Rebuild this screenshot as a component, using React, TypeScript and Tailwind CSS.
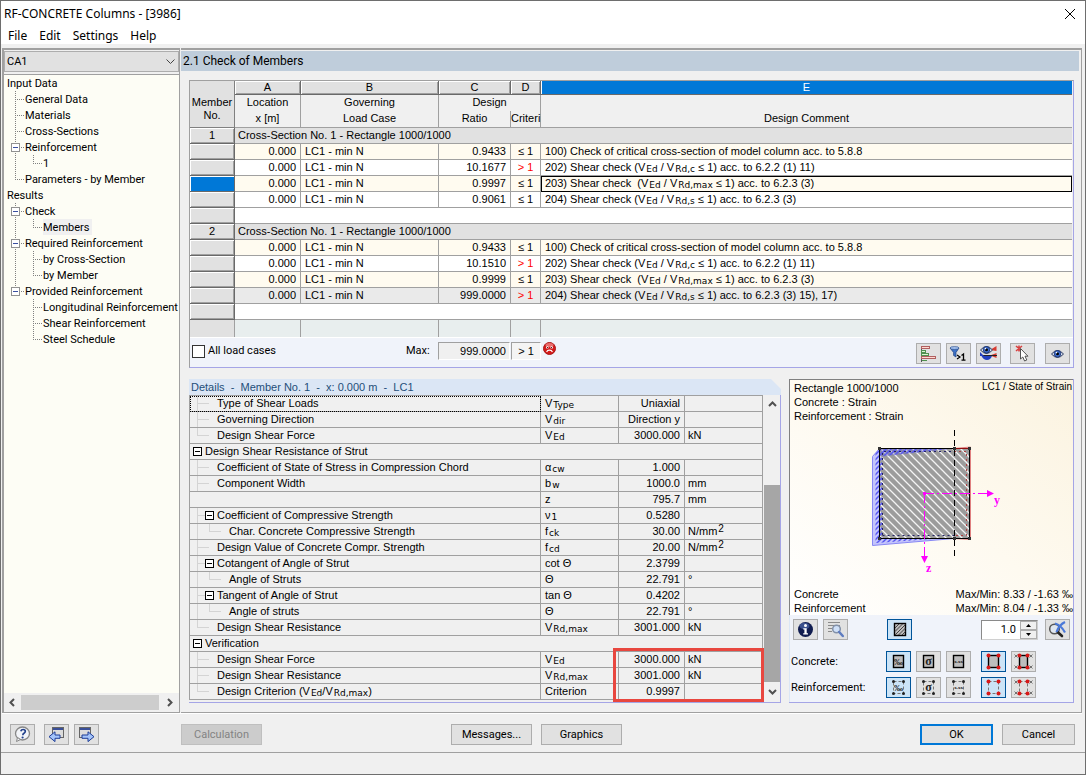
import React from 'react';

const ui = "font-[Roboto,'Liberation_Sans',sans-serif]";

/* ---------- data ---------- */

type Guide = 'tee' | 'elbow' | 'pipe' | 'boxTee' | 'boxElbow';

interface TreeItem {
  label: string;
  guides: Guide[];
  active?: boolean;
}

const treeItems: TreeItem[] = [
  { label: 'Input Data', guides: [] },
  { label: 'General Data', guides: ['tee'] },
  { label: 'Materials', guides: ['tee'] },
  { label: 'Cross-Sections', guides: ['tee'] },
  { label: 'Reinforcement', guides: ['boxTee'] },
  { label: '1', guides: ['pipe', 'elbow'] },
  { label: 'Parameters - by Member', guides: ['elbow'] },
  { label: 'Results', guides: [] },
  { label: 'Check', guides: ['boxTee'] },
  { label: 'Members', guides: ['pipe', 'elbow'], active: true },
  { label: 'Required Reinforcement', guides: ['boxTee'] },
  { label: 'by Cross-Section', guides: ['pipe', 'tee'] },
  { label: 'by Member', guides: ['pipe', 'elbow'] },
  { label: 'Provided Reinforcement', guides: ['boxElbow'] },
];

const providedItems: { label: string; guide: Guide }[] = [
  { label: 'Longitudinal Reinforcement', guide: 'tee' },
  { label: 'Shear Reinforcement', guide: 'tee' },
  { label: 'Steel Schedule', guide: 'elbow' },
];

const Sub = ({ children }: { children: React.ReactNode }) => (
  <span className="relative top-px ml-px font-['DejaVu_Sans'] text-[9px] leading-none">{children}</span>
);

interface CheckRow {
  ratio: string;
  ok: boolean;
  comment: React.ReactNode;
  active?: boolean;
  max?: boolean;
}

const shear = (no: string, sub: string, tail: string) => (
  <>
    {no}) Shear check {no === '203' && '\u00a0'}(V<Sub>Ed</Sub> / V<Sub>{sub}</Sub> ≤ 1) acc. to {tail}
  </>
);

const members: { no: number; rows: CheckRow[] }[] = [
  {
    no: 1,
    rows: [
      { ratio: '0.9433', ok: true, comment: '100) Check of critical cross-section of model column acc. to 5.8.8' },
      { ratio: '10.1677', ok: false, comment: shear('202', 'Rd,c', '6.2.2 (1) 11)') },
      { ratio: '0.9997', ok: true, comment: shear('203', 'Rd,max', '6.2.3 (3)'), active: true },
      { ratio: '0.9061', ok: true, comment: shear('204', 'Rd,s', '6.2.3 (3)') },
    ],
  },
  {
    no: 2,
    rows: [
      { ratio: '0.9433', ok: true, comment: '100) Check of critical cross-section of model column acc. to 5.8.8' },
      { ratio: '10.1510', ok: false, comment: shear('202', 'Rd,c', '6.2.2 (1) 11)') },
      { ratio: '0.9999', ok: true, comment: shear('203', 'Rd,max', '6.2.3 (3)') },
      { ratio: '999.0000', ok: false, comment: shear('204', 'Rd,s', '6.2.3 (3) 15), 17)'), max: true },
    ],
  },
];

type Cell = 'tee' | 'elbow' | 'pipe' | 'box' | 'half';

interface DetailRow {
  cells: Cell[];
  label?: React.ReactNode;
  sym?: React.ReactNode;
  value?: string;
  unit?: React.ReactNode;
  heading?: boolean;
  focused?: boolean;
}

const nmm2 = (
  <>
    N/mm<span className="relative -top-[3px] ml-px text-[10px] leading-none">2</span>
  </>
);
const vEd = <>V<Sub>Ed</Sub></>;
const vRdMax = <>V<Sub>Rd,max</Sub></>;

const details: DetailRow[] = [
  { cells: ['tee', 'half'], label: 'Type of Shear Loads', sym: <>V<Sub>Type</Sub></>, value: 'Uniaxial', focused: true },
  { cells: ['tee', 'half'], label: 'Governing Direction', sym: <>V<Sub>dir</Sub></>, value: 'Direction y' },
  { cells: ['elbow', 'half'], label: 'Design Shear Force', sym: vEd, value: '3000.000', unit: 'kN' },
  { cells: ['box'], label: 'Design Shear Resistance of Strut', heading: true },
  { cells: ['tee', 'half'], label: 'Coefficient of State of Stress in Compression Chord', sym: <>α<Sub>cw</Sub></>, value: '1.000' },
  { cells: ['tee', 'half'], label: 'Component Width', sym: <>b<Sub>w</Sub></>, value: '1000.0', unit: 'mm' },
  { cells: [], sym: 'z', value: '795.7', unit: 'mm' },
  { cells: ['tee', 'box'], label: 'Coefficient of Compressive Strength', sym: <>ν<Sub>1</Sub></>, value: '0.5280' },
  { cells: ['pipe', 'elbow', 'half'], label: 'Char. Concrete Compressive Strength', sym: <>f<Sub>ck</Sub></>, value: '30.00', unit: nmm2 },
  { cells: ['tee', 'half'], label: 'Design Value of Concrete Compr. Strength', sym: <>f<Sub>cd</Sub></>, value: '20.00', unit: nmm2 },
  { cells: ['tee', 'box'], label: 'Cotangent of Angle of Strut', sym: 'cot Θ', value: '2.3799' },
  { cells: ['pipe', 'elbow', 'half'], label: 'Angle of Struts', sym: 'Θ', value: '22.791', unit: '°' },
  { cells: ['tee', 'box'], label: 'Tangent of Angle of Strut', sym: 'tan Θ', value: '0.4202' },
  { cells: ['pipe', 'elbow', 'half'], label: 'Angle of struts', sym: 'Θ', value: '22.791', unit: '°' },
  { cells: ['elbow', 'half'], label: 'Design Shear Resistance', sym: vRdMax, value: '3001.000', unit: 'kN' },
  { cells: ['box'], label: 'Verification', heading: true },
  { cells: ['tee', 'half'], label: 'Design Shear Force', sym: vEd, value: '3000.000', unit: 'kN' },
  { cells: ['tee', 'half'], label: 'Design Shear Resistance', sym: vRdMax, value: '3001.000', unit: 'kN' },
  { cells: ['elbow', 'half'], label: <>Design Criterion (V<Sub>Ed</Sub>/V<Sub>Rd,max</Sub>)</>, sym: 'Criterion', value: '0.9997' },
];

/* ---------- small drawings ---------- */

const TreeGuide = ({ kind }: { kind: Guide }) => {
  const box = kind.startsWith('box');
  const stops = kind === 'elbow' || kind === 'boxElbow';
  return (
    <svg width="18" height="16" className="shrink-0" shapeRendering="crispEdges">
      <path d={stops ? 'M8.5 0V8' : 'M8.5 0V16'} stroke="#808080" strokeDasharray="1 1" />
      {kind !== 'pipe' && <path d="M8 8.5H17" stroke="#808080" strokeDasharray="1 1" />}
      {box && (
        <>
          <rect x="4.5" y="4.5" width="8" height="8" rx="1" fill="#fff" stroke="#919191" />
          <path d="M6 8.5H11" stroke="#3a4fa0" />
        </>
      )}
    </svg>
  );
};

const DetailGuide = ({ kind }: { kind: Cell }) => (
  <svg width="12" height="15" className="shrink-0" shapeRendering="crispEdges" fill="none" stroke="#d4d4d4">
    {kind === 'tee' && <path d="M4.5 0V15M4 7.5H12" />}
    {kind === 'elbow' && <path d="M4.5 0V7.5H12" />}
    {kind === 'pipe' && <path d="M4.5 0V15" />}
    {kind === 'half' && <path d="M0 7.5H4" />}
    {kind === 'box' && (
      <>
        <rect x="0.5" y="3.5" width="8" height="8" fill="#fff" stroke="#000" />
        <path d="M2 7.5H7" stroke="#000" />
      </>
    )}
  </svg>
);

const Chevron = ({ d }: { d: string }) => (
  <svg width="9" height="9" viewBox="0 0 9 9" fill="none" stroke="#505050" strokeWidth="2">
    <path d={d} />
  </svg>
);

const SadFace = () => (
  <svg width="13" height="13" viewBox="0 0 13 13">
    <circle cx="6.5" cy="6.5" r="6" fill="#d31a1a" stroke="#a81818" />
    <ellipse cx="6.5" cy="3" rx="4" ry="2" fill="#f59090" opacity=".7" />
    <circle cx="4.3" cy="5.4" r="1.2" fill="#fff" />
    <circle cx="8.7" cy="5.4" r="1.2" fill="#fff" />
    <circle cx="4.5" cy="5.6" r=".6" fill="#300" />
    <circle cx="8.5" cy="5.6" r=".6" fill="#300" />
    <path d="M3.6 10c1-2.4 4.8-2.4 5.8 0" fill="none" stroke="#fff" strokeWidth="1.2" />
  </svg>
);

const BarsIcon = () => (
  <svg width="17" height="17" viewBox="0 0 17 17" shapeRendering="crispEdges">
    <path d="M1.5 1V17" stroke="#555" />
    <rect x="1.5" y="1.5" width="8" height="2" fill="#ffd8d0" stroke="#b06060" />
    <rect x="1.5" y="5.5" width="4" height="2" fill="#d9f8d0" stroke="#509050" />
    <rect x="1.5" y="8.5" width="7" height="2" fill="#d9f8d0" stroke="#509050" />
    <rect x="1.5" y="11.5" width="14" height="2" fill="#ffd8d0" stroke="#b06060" />
    <path d="M2 15.5H7" stroke="#509050" />
  </svg>
);

const FilterIcon = () => (
  <svg width="19" height="17" viewBox="0 0 19 17">
    <path d="M1 3h9L7 7.5V12L4.6 10.5v-3z" fill="#3f73c8" stroke="#1c3f80" strokeWidth=".7" />
    <ellipse cx="5.5" cy="3" rx="4.5" ry="1.4" fill="#a7c4f0" stroke="#1c3f80" strokeWidth=".6" />
    <path d="M8 10l3 2-3 2" fill="none" stroke="#000" strokeWidth="1.2" />
    <path d="M12.500 10.500l2-1.500v6M12.500 15.2h4" fill="none" stroke="#000" strokeWidth="1.3" />
  </svg>
);

const Eye = () => (
  <g>
    <path d="M.5 5Q6.500 -2 12.500 5Q6.500 12 .5 5z" fill="#e8eefb" stroke="#26355c" />
    <circle cx="6.5" cy="4.8" r="3.3" fill="#3f6fd0" stroke="#132a66" strokeWidth=".8" />
    <circle cx="6.5" cy="4.8" r="1.5" fill="#000" />
    <circle cx="5.5" cy="3.6" r=".8" fill="#fff" />
  </g>
);

const ResultEyeIcon = () => (
  <svg width="19" height="17" viewBox="0 0 19 17">
    <path d="M11 5L17.5 1v5zM11 10.5l6.5-2.500v5z" fill="#d83a30" />
    <path d="M1 10.5h17" stroke="#222" />
    <path d="M1 11V7l4 4zM2.500 11H13q-1.500 4-5 4t-5.500-4z" fill="#2340c0" />
    <g transform="translate(1 0)"><Eye /></g>
  </svg>
);

const PickIcon = () => (
  <svg width="17" height="17" viewBox="0 0 17 17">
    <path d="M2 1l6 5M8 1L2 6M5 .5V6.5" stroke="#d84040" strokeWidth="1.5" />
    <path d="M6.5 3.500v10.500l2.300-2 1.800 4 2.200-1-1.800-3.800h3z" fill="#fff" stroke="#444" strokeWidth=".9" />
  </svg>
);

const InfoIcon = () => (
  <svg width="17" height="17" viewBox="0 0 17 17">
    <circle cx="8.5" cy="8.5" r="7.5" fill="#101c50" />
    <ellipse cx="7.5" cy="5" rx="5" ry="3.2" fill="#5874b8" opacity=".6" />
    <circle cx="8.5" cy="4.4" r="1.5" fill="#fff" />
    <path d="M6.3 7.2h3.4v5h1.3v1.3H6.2v-1.3h1.2V8.5H6.3z" fill="#fff" />
  </svg>
);

const TableSearchIcon = () => (
  <svg width="18" height="17" viewBox="0 0 18 17">
    <path d="M1 1.5h12M1 4.5h12M1 7.5h4M1 10.5h4" stroke="#8a8a8a" />
    <circle cx="9.5" cy="8" r="3.8" fill="#cfe0f8" stroke="#8391a8" strokeWidth="1.5" />
    <path d="M12.2 11l3.6 4" stroke="#5f7cc0" strokeWidth="2.5" strokeLinecap="round" />
  </svg>
);

const ZoomResetIcon = () => (
  <svg width="19" height="17" viewBox="0 0 19 17">
    <circle cx="6.5" cy="8" r="4.8" fill="#dfe6ef" stroke="#555" strokeWidth="1.5" />
    <path d="M9.8 11.2l4.2 3.8" stroke="#222" strokeWidth="2.6" strokeLinecap="round" />
    <path d="M7 2.500Q13 4 17 11.500M17 1Q11 4 8.500 11" fill="none" stroke="#4a78d8" strokeWidth="2.2" />
  </svg>
);

const HatchIcon = () => (
  <svg width="14" height="15" viewBox="0 0 14 15">
    <rect x="1.5" y="1.5" width="11" height="12" fill="#bdbdbd" stroke="#000" strokeWidth="1.4" />
    <path d="M2 6l4-4M2 9.500L9.500 2M2 13L12.500 2.500M5.500 13l7-7M9 13l3.500-3.500" stroke="#333" strokeWidth=".9" />
  </svg>
);

interface SectionIconProps {
  text?: string;
  dashed?: boolean;
  corners?: boolean;
  labels?: boolean;
}

// one drawing for all concrete / reinforcement toggles
const SectionIcon = ({ text, dashed, corners, labels }: SectionIconProps) => {
  const x0 = labels ? 5.5 : 4.5;
  const x1 = labels ? 13.5 : 14.5;
  const y0 = 2.5;
  const y1 = 14.5;
  const pts = [[x0, y0], [x1, y0], [x0, y1], [x1, y1]];
  const size = text === 'σ' ? 12 : text === '‰' ? 9 : 5;
  return (
    <svg width="19" height="17" viewBox="0 0 19 17">
      <rect
        x={x0}
        y={y0}
        width={x1 - x0}
        height={y1 - y0}
        fill={dashed ? 'none' : '#bdbdbd'}
        stroke={dashed ? '#777' : '#000'}
        strokeWidth={dashed ? 1 : 1.4}
        strokeDasharray={dashed ? '3 2' : undefined}
      />
      {text && (
        <text x="9.5" y={text.length > 1 ? 10 : 12} textAnchor="middle" fontFamily="Liberation Serif" fontWeight="bold" fontSize={size} fill="#222">
          {text}
        </text>
      )}
      {labels && (
        <path
          d="M.5 1.500l3 3M3.500 1.500l-3 3M15.500 1.500l3 3M18.500 1.500l-3 3M.5 12.500l3 3M3.500 12.500l-3 3M15.500 12.500l3 3M18.500 12.500l-3 3"
          stroke="#555"
          strokeWidth=".8"
        />
      )}
      {(corners || dashed) &&
        pts.map(([x, y]) => <circle key={`${x}-${y}`} cx={x} cy={y} r={corners ? 2 : 1.5} fill={corners ? '#d81818' : '#222'} />)}
    </svg>
  );
};

const HelpIcon = () => (
  <svg width="17" height="17" viewBox="0 0 17 17">
    <ellipse cx="8.500" cy="7.500" rx="7" ry="6.500" fill="#f2f4f8" stroke="#888" strokeWidth="1.3" />
    <path d="M3.500 11.500L2.500 15.500l4-2z" fill="#f2f4f8" stroke="#888" />
    <path d="M6.800 5.200q.5-1.700 2.300-1.700 2.200 0 2.200 1.800 0 1.200-1.300 2-1.100.7-1.200 1.900" fill="none" stroke="#22418c" strokeWidth="1.7" />
    <circle cx="8.600" cy="11.500" r="1.100" fill="#22418c" />
  </svg>
);

const WindowArrowIcon = ({ right }: { right?: boolean }) => (
  <svg width="17" height="17" viewBox="0 0 17 17">
    <rect x={right ? 1.5 : 4.5} y="1.5" width="11" height="10" fill="#dcdcdc" stroke="#666" />
    <path d={right ? 'M2 3h10' : 'M5 3h10'} stroke="#3a4f98" strokeWidth="2" />
    <path
      d={right ? 'M4 9h6V5.800l6 4.900-6 4.900v-3.300H4z' : 'M12 9H7V5.800L1 10.700l6 4.900v-3.300h5z'}
      fill="#a4c4fa"
      stroke="#1d3c98"
    />
  </svg>
);

const SectionDrawing = () => (
  <svg width="140" height="150" viewBox="862 428 140 150" className="mx-auto mt-[5px] block" role="img" aria-label="Strain in section">
    <defs>
      <pattern id="hatch" width="8" height="8" patternUnits="userSpaceOnUse">
        <rect width="8" height="8" fill="#9c9c9c" />
        <path d="M-1 -1l10 10M7 -1l2 2M-1 7l2 2" stroke="#f4f4f4" strokeWidth="1.3" />
      </pattern>
      <pattern id="strain" width="5" height="5" patternUnits="userSpaceOnUse">
        <path d="M-1 6l7-7M-1 1l2-2M4 6l2-2" stroke="#5555f0" strokeWidth="1.5" />
      </pattern>
    </defs>
    <path d="M872.5 456.5L879.5 448.5V538.5H954L872.5 545.5z" fill="#c4c4fb" stroke="#8888f4" />
    <rect x="879.5" y="448.5" width="90" height="90" fill="url(#hatch)" />
    <path d="M879.5 448.5H954L879.5 457z" fill="#5d5dd0" fillOpacity=".35" />
    <path d="M875.5 453L879.5 448.5H954L882 456V538.5H940L875.5 543z" fill="url(#strain)" />
    <path d="M954 448.5L970.5 447V539.5L954 538.5" fill="none" stroke="#e08080" />
    <path d="M882.5 535V451.5H954M882.5 535.5H954" fill="none" stroke="#222266" strokeDasharray="2 3" />
    <path d="M954 451.5H966.5V535.5H954" fill="none" stroke="#b04040" strokeDasharray="2 3" />
    <rect x="879.5" y="448.5" width="90" height="90" fill="none" stroke="#000" />
    <path d="M955 448.5h14" stroke="#901010" />
    <path d="M878 447h3v3h-3zM953 447h3v3h-3zM968 447h3v3h-3zM878 537h3v3h-3zM953 537h3v3h-3zM968 537h3v3h-3z" fill="#333" />
    <path d="M954.5 430V557" stroke="#000" strokeDasharray="6 4" />
    <path d="M924 493.5H987M924.5 493V556" stroke="#f0f" fill="none" strokeDasharray="10 3 2 3" />
    <path d="M923 492h3v3h-3zM987 490l7 3.5-7 3.5zM921 556h7l-3.500 7z" fill="#f0f" />
    <g fill="#f0f" fontFamily="Liberation Serif" fontSize="12" fontWeight="bold">
      <text x="994" y="504">y</text>
      <text x="926" y="572">z</text>
    </g>
  </svg>
);

/* ---------- controls ---------- */

interface ToolButtonProps {
  label: string;
  on?: boolean;
  className?: string;
  children: React.ReactNode;
}

const ToolButton = ({ label, on, className = '', children }: ToolButtonProps) => (
  <button
    type="button"
    aria-label={label}
    className={`flex h-[21px] w-[25px] shrink-0 items-center justify-center border ${on ? 'border-[#005499] bg-[#cce4f7]' : 'border-[#adadad] bg-[#e1e1e1]'} ${className}`}
  >
    {children}
  </button>
);

const PushButton = ({ children, className = '' }: { children: React.ReactNode; className?: string }) => (
  <button type="button" className={`h-[21px] border border-[#adadad] bg-[#e1e1e1] pt-px ${className}`}>
    {children}
  </button>
);

/* ---------- parts ---------- */

const Navigator = () => (
  <aside className={`flex w-[178px] shrink-0 flex-col border-t-2 border-r border-l-2 border-[#a0a0a0] ${ui}`}>
    <div className="relative mt-px">
      <select aria-label="Case" className="block h-[21px] w-full appearance-none border border-[#adadad] bg-[#e1e1e1] pt-[2px] pl-[2px] text-[11px]">
        <option>CA1</option>
      </select>
      <svg width="9" height="6" viewBox="0 0 9 6" className="pointer-events-none absolute top-2 right-1" fill="none" stroke="#444">
        <path d="M.5 .5l4 4 4-4" />
      </svg>
    </div>
    <div className="mt-[2px] grow overflow-hidden border-t border-[#a0a0a0] bg-[#fdfdf5] text-[11px] leading-4">
      <ul>
        {treeItems.map((item) => (
          <li key={item.label} className="flex h-4 pl-[3px] whitespace-nowrap">
            {item.guides.map((g, i) => (
              <TreeGuide key={i} kind={g} />
            ))}
            <span className={`pt-px leading-[15px] ${item.active ? 'bg-[#f0f0f0] pr-[2px]' : ''}`}>{item.label}</span>
          </li>
        ))}
        {providedItems.map((item) => (
          <li key={item.label} className="flex h-4 pl-[21px] whitespace-nowrap">
            <TreeGuide kind={item.guide} />
            <span className="pt-px leading-[15px]">{item.label}</span>
          </li>
        ))}
      </ul>
    </div>
    <div className="flex h-[19px] items-center bg-[#f0f0f0]">
      <button type="button" aria-label="Scroll left" className="flex w-[17px] justify-center">
        <Chevron d="M6 1L2.5 4.5 6 8" />
      </button>
      <div className="h-[15px] grow bg-[#cdcdcd]" />
      <button type="button" aria-label="Scroll right" className="flex w-5 justify-center">
        <Chevron d="M3 1l3.5 3.5L3 8" />
      </button>
    </div>
    <div className="h-px bg-[#a0a0a0]" />
  </aside>
);

const bevel = 'border-r border-b border-[#696969] bg-[#e1e1e1] shadow-[inset_1px_1px_0_#fff,inset_-1px_-1px_0_#a0a0a0]';
const cell = 'border-r border-b border-[#a0a0a0]';
const head = 'p-0 align-top leading-[14px] font-normal';

const ResultTable = () => (
  <table className="w-full table-fixed border-separate border-spacing-0 text-[11px] leading-[15px] whitespace-nowrap">
    <colgroup>
      <col className="w-[45px]" />
      <col className="w-[66px]" />
      <col className="w-[138px]" />
      <col className="w-[72px]" />
      <col className="w-[30px]" />
      <col />
    </colgroup>
    <thead>
      <tr className="h-[14px] leading-[13px]">
        <th rowSpan={3} className="border-r border-b border-[#808080] bg-[#e1e1e1] p-0 pt-[9px] font-normal">
          Member<br />No.
        </th>
        {['A', 'B', 'C', 'D'].map((c) => (
          <th key={c} className={`p-0 font-normal ${bevel}`}>{c}</th>
        ))}
        <th className="border-b border-[#696969] bg-[#0078d7] p-0 font-normal text-white shadow-[inset_1px_0_0_#fff]">E</th>
      </tr>
      <tr className="h-4 bg-[#f0f0f0]">
        <th className={`border-r border-[#a0a0a0] ${head}`}>Location</th>
        <th className={`border-r border-[#a0a0a0] ${head}`}>Governing</th>
        <th colSpan={2} className={`border-r border-[#a0a0a0] ${head}`}>Design</th>
        <th className={head} />
      </tr>
      <tr className="h-[17px] bg-[#f0f0f0]">
        <th className={`${head} ${cell}`}>x [m]</th>
        <th className={`${head} ${cell}`}>Load Case</th>
        <th className={`${head} ${cell}`}>Ratio</th>
        <th className={`${head} ${cell}`}>Criteri</th>
        <th className={`border-b border-[#a0a0a0] ${head}`}>Design Comment</th>
      </tr>
    </thead>
    <tbody>
      {members.map((m) => (
        <React.Fragment key={m.no}>
          <tr className="h-4">
            <th className={`p-0 font-normal ${bevel}`}>{m.no}</th>
            <td colSpan={5} className="border-b border-[#a0a0a0] bg-[#e1e1e1] p-0 pl-[3px]">
              Cross-Section No. 1 - Rectangle 1000/1000
            </td>
          </tr>
          {m.rows.map((r, i) => (
            <tr key={i} className={`h-4 ${r.max ? 'bg-[#eaeaea]' : i % 2 ? 'bg-white' : 'bg-[#fffbf0]'}`}>
              <th className={`p-0 ${r.active ? 'border-r border-b border-[#696969] bg-[#0078d7] shadow-[inset_1px_1px_0_#fff]' : bevel}`} />
              <td className={`p-0 pr-1 text-right ${cell}`}>0.000</td>
              <td className={`p-0 pl-1 ${cell}`}>LC1 - min N</td>
              <td className={`p-0 pr-1 text-right ${cell}`}>{r.ratio}</td>
              <td className={`p-0 text-center ${cell} ${r.ok ? '' : 'text-[#ff0000]'}`}>{r.ok ? '≤ 1' : '> 1'}</td>
              <td className={`border-b border-[#a0a0a0] p-0 pl-1 ${r.active ? 'outline outline-1 -outline-offset-1 outline-black' : ''}`}>{r.comment}</td>
            </tr>
          ))}
          <tr className="h-4">
            <th className={`p-0 ${bevel}`} />
            <td colSpan={5} className="border-b border-[#a0a0a0] bg-white p-0" />
          </tr>
        </React.Fragment>
      ))}
      <tr className="h-[17px] bg-[#e8eeee]">
        <th className="border-r border-[#a0a0a0] bg-[#e1e1e1] p-0" />
        <td className="border-r border-[#a0a0a0] p-0" />
        <td className="border-r border-[#a0a0a0] p-0" />
        <td className="border-r border-[#a0a0a0] p-0" />
        <td className="border-r border-[#a0a0a0] p-0" />
        <td className="p-0" />
      </tr>
    </tbody>
  </table>
);

const ResultBar = () => (
  <div className="flex h-[30px] items-start border-t border-white bg-[#f0f3fa] text-[11px]">
    <label className={`mt-[5px] flex w-[206px] items-center gap-[3px] pl-[2px] leading-4 ${ui}`}>
      <input type="checkbox" className="size-[13px] appearance-none border border-[#333] bg-white" />
      All load cases
    </label>
    <label htmlFor="max-ratio" className={`mt-[5px] w-[42px] pl-[10px] leading-4 ${ui}`}>Max:</label>
    <input
      id="max-ratio"
      readOnly
      value="999.0000"
      className="mt-1 h-[18px] w-[72px] border border-t-[#a0a0a0] border-r-white border-b-white border-l-[#a0a0a0] bg-[#f0f0f0] pr-[3px] text-right"
    />
    <output className="mt-1 ml-px h-[18px] w-[30px] border border-t-[#a0a0a0] border-r-white border-b-white border-l-[#a0a0a0] bg-[#f4f4f4] text-center leading-[17px]">
      &gt; 1
    </output>
    <div className="mt-1 ml-[2px]">
      <SadFace />
    </div>
    <div className="mt-[5px] mr-[3px] ml-auto flex">
      <ToolButton label="Ratio bars"><BarsIcon /></ToolButton>
      <ToolButton label="Filter" className="ml-[5px]"><FilterIcon /></ToolButton>
      <ToolButton label="Show results" className="ml-[5px]"><ResultEyeIcon /></ToolButton>
      <ToolButton label="Pick member" className="ml-[9px]"><PickIcon /></ToolButton>
      <ToolButton label="View mode" className="ml-[10px]">
        <svg width="13" height="10" viewBox="0 0 13 10"><Eye /></svg>
      </ToolButton>
    </div>
  </div>
);

const DetailsPanel = () => (
  <section className="relative grow">
    <h2 className="h-4 bg-[#dbe6f5] pl-[2px] text-[11px] leading-4 whitespace-pre text-[#1f4e79] [clip-path:polygon(0_0,calc(100%-10px)_0,100%_10px,100%_100%,0_100%)]">
      {'Details  -  Member No. 1  -  x: 0.000 m  -  LC1'}
    </h2>
    <div className="flex border-r border-b border-[#a5a5e6] pb-[2px]">
      <table className="w-full table-fixed border-separate border-spacing-0 border-t border-l border-[#a0a0a0] bg-[#f0f0f0] text-[11px] leading-[15px] whitespace-nowrap">
        <colgroup>
          <col />
          <col className="w-[78px]" />
          <col className="w-[66px]" />
          <col className="w-[78px]" />
        </colgroup>
        <tbody>
          {details.map((r, i) => (
            <tr key={i} className="h-4">
              <td
                colSpan={r.heading ? 4 : 1}
                className={`p-0 ${cell} ${r.focused ? 'outline-1 -outline-offset-1 outline-black outline-dotted' : ''}`}
              >
                <div className="flex h-[15px] pl-[3px]">
                  {r.cells.map((c, j) => (
                    <DetailGuide key={j} kind={c} />
                  ))}
                  <span>{r.label}</span>
                </div>
              </td>
              {!r.heading && (
                <>
                  <td className={`p-0 pl-1 ${cell}`}>{r.sym}</td>
                  <td className={`p-0 pr-1 text-right ${cell}`}>{r.value}</td>
                  <td className={`p-0 pl-[3px] ${cell}`}>{r.unit}</td>
                </>
              )}
            </tr>
          ))}
        </tbody>
      </table>
      <div className="ml-px flex w-4 shrink-0 flex-col bg-[#f0f0f0]">
        <button type="button" aria-label="Scroll up" className="flex h-[18px] items-center justify-center">
          <Chevron d="M1 6l3.5-3.5L8 6" />
        </button>
        <div className="mt-[72px] grow bg-[#a6a6a6]" />
        <button type="button" aria-label="Scroll down" className="flex h-[18px] items-center justify-center">
          <Chevron d="M1 3l3.5 3.5L8 3" />
        </button>
      </div>
    </div>
    <div className="pointer-events-none absolute right-[17px] bottom-[1px] h-[54px] w-[151px] border-3 border-[#e8473f]" />
  </section>
);

const GraphicPanel = () => (
  <section className="flex w-[285px] shrink-0 flex-col border-r border-b border-[#a5a5e6] text-[11px] leading-[14px]">
    <div className="flex grow flex-col border-t border-l border-[#808080] bg-linear-to-bl from-[#fbf3e0] via-[#fefaf0] via-50% to-white pt-px">
      <div className="flex justify-between pl-1">
        <p>
          Rectangle 1000/1000<br />Concrete : Strain<br />Reinforcement : Strain
        </p>
        <p className="pr-px text-[10px] leading-3">LC1 / State of Strain</p>
      </div>
      <SectionDrawing />
      <div className="mt-auto flex justify-between pl-1 whitespace-nowrap">
        <p>Concrete<br />Reinforcement</p>
        <p className="text-right">Max/Min: 8.33 / -1.63 ‰<br />Max/Min: 8.04 / -1.33 ‰</p>
      </div>
    </div>
    <div className={`border-l border-[#dbe6f5] bg-[#f0f3fa] pt-1 pr-[3px] pb-1 ${ui}`}>
      <div className="flex pl-[3px]">
        <ToolButton label="Info"><InfoIcon /></ToolButton>
        <ToolButton label="Result table" className="ml-[5px]"><TableSearchIcon /></ToolButton>
        <ToolButton label="Hatching" on className="ml-[39px]"><HatchIcon /></ToolButton>
        <div className="mt-px ml-auto flex h-5 w-[57px] border border-[#8a8a8a] border-r-[#d0d0d0] border-b-[#d0d0d0] bg-white">
          <input aria-label="Scale factor" defaultValue="1.0" className="w-[38px] pr-1 text-right" />
          <div className="flex grow flex-col">
            <button type="button" aria-label="Increase" className="flex h-[9px] items-center justify-center border border-[#adadad] bg-[#f0f0f0]">
              <svg width="5" height="3"><path d="M0 3l2.5-3L5 3z" /></svg>
            </button>
            <button type="button" aria-label="Decrease" className="flex h-[9px] items-center justify-center border border-[#adadad] bg-[#f0f0f0]">
              <svg width="5" height="3"><path d="M0 0l2.5 3L5 0z" /></svg>
            </button>
          </div>
        </div>
        <ToolButton label="Reset zoom" className="ml-[7px]"><ZoomResetIcon /></ToolButton>
      </div>
      {['Concrete:', 'Reinforcement:'].map((name, i) => (
        <div key={name} className={`flex items-center pl-px ${i ? 'mt-[5px]' : 'mt-[11px]'}`}>
          <span className="w-[95px] pt-px">{name}</span>
          <ToolButton label={`${name} strain`} on><SectionIcon text="‰" dashed={i === 1} /></ToolButton>
          <ToolButton label={`${name} stress`} className="ml-[5px]"><SectionIcon text="σ" dashed={i === 1} /></ToolButton>
          <ToolButton label={`${name} values`} className="ml-[5px]"><SectionIcon text="x.xx" dashed={i === 1} /></ToolButton>
          <ToolButton label={`${name} corner points`} on className="ml-[10px]"><SectionIcon corners dashed={i === 1} /></ToolButton>
          <ToolButton label={`${name} corner values`} className="ml-[5px]"><SectionIcon corners labels dashed={i === 1} /></ToolButton>
        </div>
      ))}
    </div>
  </section>
);

export default function App() {
  return (
    <div className="flex min-h-screen flex-col border border-[#6e6e6e] bg-[#f0f0f0] font-['Liberation_Sans',Arial,sans-serif] text-black">
      <header className="bg-white font-['Noto_Sans',sans-serif] text-[12px]">
        <div className="flex h-[25px] items-center justify-between pl-[3px]">
          <h1>RF-CONCRETE Columns - [3986]</h1>
          <button type="button" aria-label="Close" className="mr-[9px]">
            <svg width="12" height="12" viewBox="0 0 12 12" stroke="#000">
              <path d="M1 1l10 10M11 1L1 11" />
            </svg>
          </button>
        </div>
        <nav className="flex h-[18px] items-center gap-3 pt-px pl-[7px]">
          <button type="button">File</button>
          <button type="button">Edit</button>
          <button type="button">Settings</button>
          <button type="button">Help</button>
        </nav>
      </header>

      <main className="mt-1 mr-[3px] ml-px flex grow gap-px border-b border-white">
        <Navigator />
        <div className="flex min-w-0 grow flex-col border-t-2 border-r border-b border-[#a0a0a0]">
          <h2 className={`mt-px mr-[2px] h-5 bg-[#bfcddb] pl-[2px] text-[12px] leading-5 ${ui}`}>
            2.1 Check of Members
          </h2>
          <div className="mt-[9px] mr-[7px] ml-2 border border-t-[#a0a0a0] border-r-[#a5a5e6] border-b-[#a5a5e6] border-l-[#a0a0a0]">
            <div className="pr-px">
              <ResultTable />
            </div>
            <ResultBar />
          </div>
          <div className="mt-[11px] mr-[7px] mb-[9px] ml-2 flex gap-2">
            <DetailsPanel />
            <GraphicPanel />
          </div>
        </div>
      </main>

      <footer className={`text-[11px] ${ui}`}>
        <div className="flex h-[38px] items-start pt-[10px] pl-[9px]">
          <ToolButton label="Help"><HelpIcon /></ToolButton>
          <ToolButton label="Previous" className="ml-[9px]"><WindowArrowIcon /></ToolButton>
          <ToolButton label="Next" className="ml-[5px]"><WindowArrowIcon right /></ToolButton>
          <button type="button" disabled className="ml-[82px] h-[21px] w-[81px] border border-[#bfbfbf] bg-[#cccccc] pt-px text-[#838383]">
            Calculation
          </button>
          <PushButton className="ml-[189px] w-[81px]">Messages...</PushButton>
          <PushButton className="ml-[9px] w-[81px]">Graphics</PushButton>
          <button type="button" className="mr-[9px] ml-auto h-[21px] w-[73px] border-2 border-[#0078d7] bg-[#e1e1e1] pt-px">OK</button>
          <PushButton className="mr-[10px] w-[73px]">Cancel</PushButton>
        </div>
        <div className="h-[22px] border-t border-[#a0a0a0]" />
      </footer>
    </div>
  );
}
